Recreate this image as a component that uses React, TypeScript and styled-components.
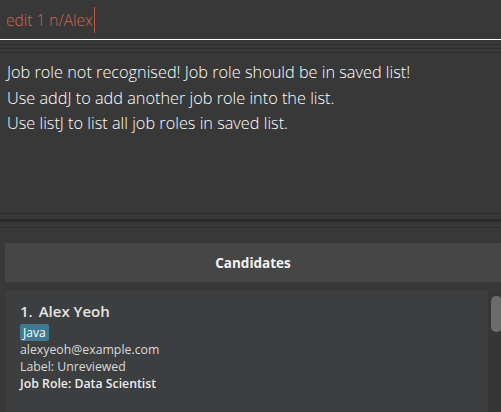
import React from "react";
import styled, { createGlobalStyle } from "styled-components";

const Global = createGlobalStyle`
  html, body { margin: 0; padding: 0; background: #383838; }
  body { width: 501px; height: 412px; overflow: hidden; }
  #root { height: 412px; }
`;

const Window = styled.div`
  display: flex;
  flex-direction: column;
  height: 412px;
  background: #383838;
  overflow: hidden;
`;

const CommandBox = styled.div`
  height: 40px;
  box-sizing: border-box;
  border-bottom: 1px solid #ffffff;
  display: flex;
  align-items: center;
  padding-left: 6px;
  font-family: "Open Sans", "Noto Sans", sans-serif;
  font-weight: 300;
  font-size: 15.5px;
  color: #d06651;
`;

const Caret = styled.span`
  display: inline-block;
  width: 1.5px;
  height: 26px;
  background: #b8594b;
  margin-left: 1px;
`;

const DividerGroup = styled.div<{ $top: number; $gap: number }>`
  display: flex;
  flex-direction: column;
  gap: ${(p) => p.$gap}px;
  padding-top: ${(p) => p.$top}px;
`;

const Rule = styled.div<{ $h?: number; $c?: string }>`
  height: ${(p) => p.$h ?? 1}px;
  background: ${(p) => p.$c ?? "#2c2c2c"};
`;

const ResultDisplay = styled.div`
  height: 160px;
  box-sizing: border-box;
  padding: 7px 7px;
  font-family: "Open Sans", "Noto Sans", sans-serif;
  font-weight: 300;
  font-size: 16.3px;
  line-height: 25.7px;
  color: #ffffff;
`;

const ListPane = styled.div`
  flex: 1;
  display: flex;
  flex-direction: column;
  padding: 15px 0 0 5px;
  min-height: 0;
`;

const Header = styled.div`
  height: 39px;
  background: #464646;
  display: flex;
  align-items: center;
  justify-content: center;
  font-family: "Open Sans", "Noto Sans", sans-serif;
  font-weight: 700;
  font-size: 13.5px;
  color: #f2f2f2;
`;

const ListBody = styled.div`
  flex: 1;
  display: flex;
  margin-top: 9px;
  min-height: 0;
`;

const Cards = styled.div`
  flex: 1;
  display: flex;
  flex-direction: column;
`;

const Card = styled.div`
  background: #3c3e3f;
  padding: 10px 15px 0 15px;
  flex: 1;
  display: flex;
  flex-direction: column;
  align-items: flex-start;
`;

const Name = styled.div`
  font-family: "Open Sans", "Noto Sans", sans-serif;
  font-weight: 600;
  font-size: 15px;
  line-height: 20px;
  color: #e4e4e4;
  display: flex;
  gap: 6px;
`;

const Tags = styled.div`
  display: flex;
  gap: 4px;
  margin-top: 3px;
`;

const Tag = styled.span`
  background: #3e7b91;
  color: #ffffff;
  font-family: "Open Sans", "Noto Sans", sans-serif;
  font-size: 12px;
  line-height: 15px;
  padding: 1px 3px;
  border-radius: 2px;
`;

const Small = styled.div<{ $strong?: boolean }>`
  font-family: "Open Sans", "Noto Sans", sans-serif;
  font-size: 12.3px;
  line-height: 17px;
  font-weight: ${(p) => (p.$strong ? 600 : 400)};
  color: ${(p) => (p.$strong ? "#ececec" : "#dadada")};
`;

const Track = styled.div`
  width: 13px;
  background: #363636;
  padding: 5px 0 0 3px;
  box-sizing: border-box;
`;

const Thumb = styled.div`
  width: 11px;
  height: 36px;
  border-radius: 5px;
  background: #6b6b6b;
`;

export default function App() {
  return (
    <>
      <Global />
      <Window>
        <CommandBox>
          <span>edit 1 n/Alex</span>
          <Caret />
        </CommandBox>
        <DividerGroup $top={4} $gap={3}>
          <Rule />
          <Rule />
          <Rule />
        </DividerGroup>
        <ResultDisplay>
          <div>Job role not recognised! Job role should be in saved list!</div>
          <div>Use addJ to add another job role into the list.</div>
          <div>Use listJ to list all job roles in saved list.</div>
        </ResultDisplay>
        <DividerGroup $top={0} $gap={5}>
          <Rule />
          <Rule $h={3} $c="#2a2a2a" />
          <Rule />
        </DividerGroup>
        <ListPane>
          <Header>Candidates</Header>
          <ListBody>
            <Cards>
              <Card>
                <Name>
                  <span>1.</span>
                  <span>Alex Yeoh</span>
                </Name>
                <Tags>
                  <Tag>Java</Tag>
                </Tags>
                <Small>alexyeoh@example.com</Small>
                <Small>Label: Unreviewed</Small>
                <Small $strong>Job Role: Data Scientist</Small>
              </Card>
            </Cards>
            <Track>
              <Thumb />
            </Track>
          </ListBody>
        </ListPane>
      </Window>
    </>
  );
}
